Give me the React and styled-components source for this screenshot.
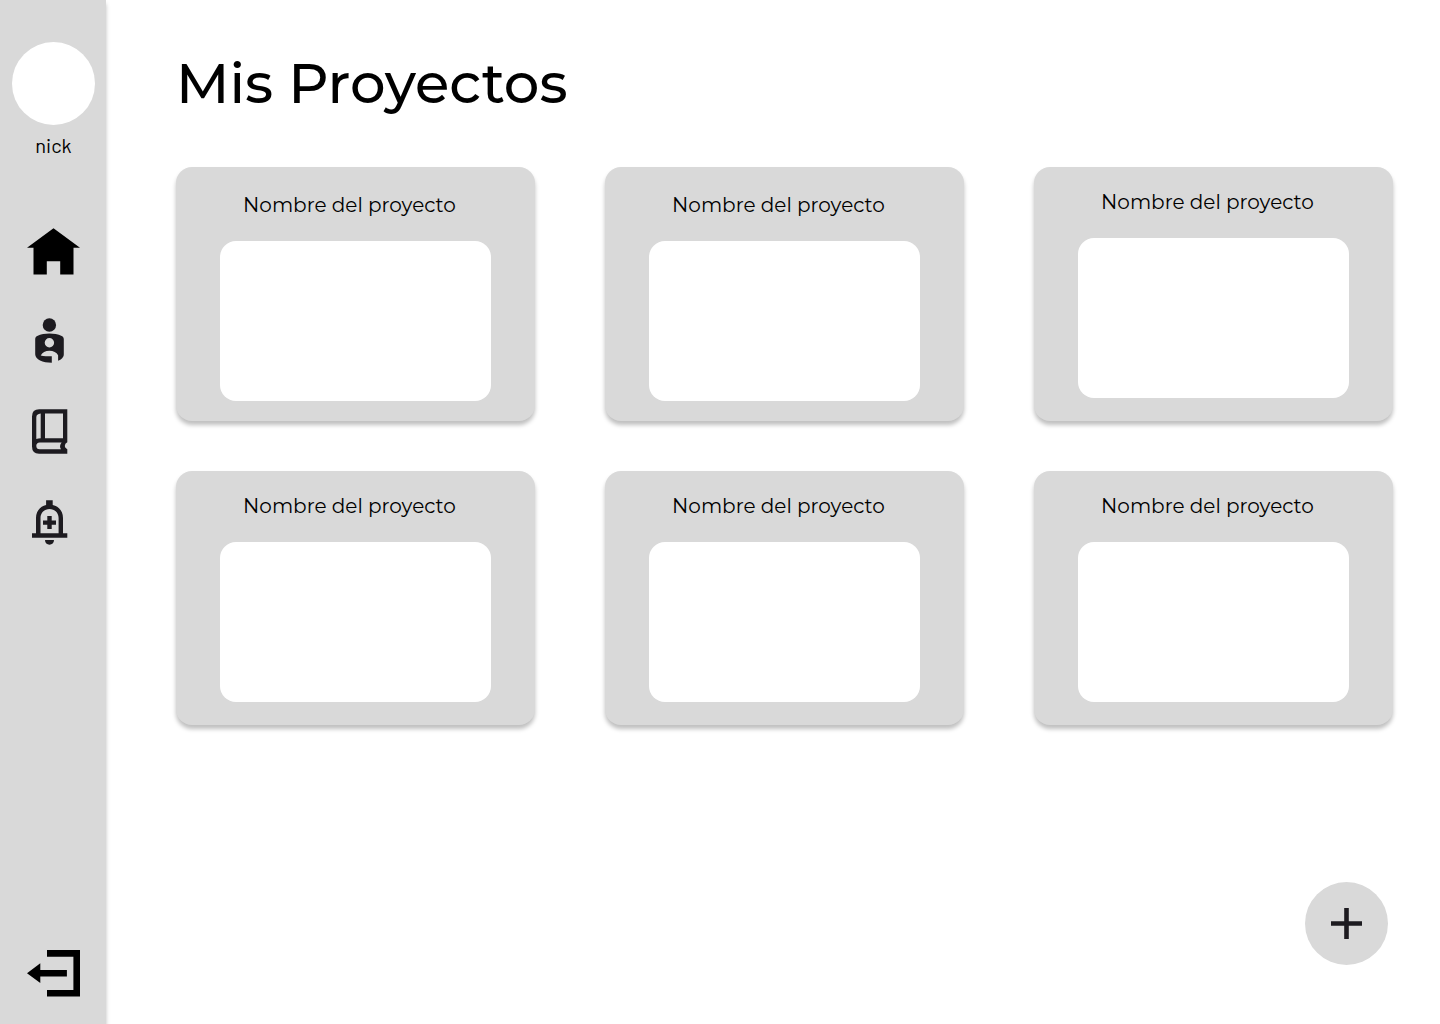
import React from "react";
import styled, { createGlobalStyle } from "styled-components";

const GlobalStyle = createGlobalStyle`
  *, *::before, *::after { box-sizing: border-box; }
  body { margin: 0; background: #fff; color: #000; font-family: Montserrat, Inter, sans-serif; }
`;

const Page = styled.div`
  display: flex;
  min-height: 100vh;
`;

const Sidebar = styled.aside`
  display: flex;
  flex-direction: column;
  align-items: center;
  flex: 0 0 106px;
  padding: 42px 0 27px;
  background: #d9d9d9;
  box-shadow: 0 4px 4px rgba(0, 0, 0, 0.25);
`;

const Profile = styled.div`
  display: flex;
  flex-direction: column;
  align-items: center;
  gap: 8px;
  padding-left: 1px;
`;

const Avatar = styled.div`
  width: 83px;
  height: 83px;
  border-radius: 50%;
  background: #fff;
`;

const Nick = styled.span`
  font: 400 20px/24px Barlow, Roboto, sans-serif;
`;

const Nav = styled.nav`
  display: flex;
  flex-direction: column;
  gap: 44px;
  margin-top: 70px;
`;

const IconLink = styled.a`
  display: block;
  height: 47px;
  color: ${({ $tone }) => $tone || "#1d1b20"};
`;

const IconButton = styled.button`
  display: block;
  height: 47px;
  margin-top: auto;
  padding: 0;
  border: 0;
  background: none;
  color: #000;
  cursor: pointer;
`;

const Glyph = styled.svg`
  display: block;
  overflow: visible;
  fill: currentColor;
`;

const Main = styled.main`
  flex: 1;
  min-width: 0;
  padding: 49px 47px 49px 70px;
`;

const Title = styled.h1`
  margin: 0 0 50px;
  font-size: 56px;
  line-height: 68px;
  font-weight: 500;
`;

const Grid = styled.div`
  display: grid;
  grid-template-columns: repeat(3, minmax(0, 1fr));
  gap: 50px 70px;
`;

const Card = styled.article`
  display: flex;
  flex-direction: column;
  gap: 24px;
  min-height: 254px;
  padding: ${({ $roomy }) => ($roomy ? "26px 44px 20px" : "23px 44px")};
  border-radius: 16px;
  background: #d9d9d9;
  box-shadow: 0 4px 4px rgba(0, 0, 0, 0.25);
`;

const CardTitle = styled.h2`
  margin: 0;
  padding-right: 12px;
  text-align: center;
  white-space: nowrap;
  font-size: 20px;
  line-height: 24px;
  font-weight: 400;
`;

const Preview = styled.div`
  height: 160px;
  border-radius: 16px;
  background: #fff;
`;

const AddButton = styled.button`
  position: fixed;
  right: 52px;
  bottom: 59px;
  display: grid;
  place-items: center;
  width: 83px;
  height: 83px;
  padding: 0;
  border: 0;
  border-radius: 50%;
  background: #d9d9d9;
  color: #1d1b20;
  cursor: pointer;
`;

const Icon = ({ children }) => (
  <Glyph width="53" height="47" viewBox="0 0 53 47" aria-hidden="true">{children}</Glyph>
);

const HomeIcon = () => (
  <Icon><path d="M26.5 1.2 53 20.8H46.5V47.5H33.2V34.2H19.8V47.5H6.5V20.8H0Z" /></Icon>
);

const PersonIcon = () => (
  <Icon>
    <circle cx="22.4" cy="7" r="6.7" />
    <path
      fillRule="evenodd"
      d="M8.2 21.2C8.2 19.8 8.9 18.7 10.2 18C17.5 14.8 27.4 14.8 34.7 18C36 18.7 36.8 19.8 36.8 21.2V36.2C36.8 39.4 34.4 41.4 31.1 42.7V37.3C29.6 34.3 26.4 32.7 22.4 32.7C18.4 32.7 15.2 34.3 13.7 37.4C16.6 38.3 20.7 38.3 24.8 38.3V44.7C15.7 44.7 8.2 41.2 8.2 36.2ZM22.4 20A4.7 4.7 0 1 0 22.4 29.4A4.7 4.7 0 1 0 22.4 20Z"
    />
  </Icon>
);

const BookIcon = () => (
  <Icon>
    <path
      fillRule="evenodd"
      d="M12.2 0.3H40.3V33.3L38.4 34.7Q37.3 36.8 38.4 38.8L40.3 40.3V44.7H12Q5 44.7 5 37.6V7.4Q5 0.3 12.2 0.3ZM18 4.5V29.3H36V4.5ZM13.7 4.6Q9.3 5 9.3 8.5V29.9Q11.3 29.3 13.7 29.3ZM12.7 33.4Q9.3 33.6 9.3 36.8Q9.3 40.3 12.7 40.3H34Q31.8 36.8 34.6 33.4Z"
    />
  </Icon>
);

const BellIcon = () => (
  <Icon>
    <path
      fillRule="evenodd"
      d="M19.1 0.3H25.7V5C32 6.4 36 11.5 36 18V33.3H40.3V37.7H5V33.3H9V18C9 11.5 13 6.4 19.1 5ZM13.5 33.3H31.6V18C31.6 12.8 27.7 9 22.5 9C17.4 9 13.5 12.8 13.5 18Z"
    />
    <path d="M20.3 16H24.7V20.4H29V24.7H24.7V29H20.3V24.7H16V20.4H20.3ZM18 40H27C27 42.8 25 44.7 22.5 44.7C20 44.7 18 42.8 18 40Z" />
  </Icon>
);

const ExitIcon = () => (
  <Icon><path d="M20 0H53V46.6H20V39.9H46.4V6.7H20ZM0 23.3 13.3 13.3V20H39.9V26.6H13.3V33Z" /></Icon>
);

const projects = [
  { id: 1, name: "Nombre del proyecto", roomy: true },
  { id: 2, name: "Nombre del proyecto", roomy: true },
  { id: 3, name: "Nombre del proyecto" },
  { id: 4, name: "Nombre del proyecto" },
  { id: 5, name: "Nombre del proyecto" },
  { id: 6, name: "Nombre del proyecto" },
];

export default function App() {
  return (
    <>
      <GlobalStyle />
      <Page>
        <Sidebar>
          <Profile>
            <Avatar />
            <Nick>nick</Nick>
          </Profile>
          <Nav>
            <IconLink href="#inicio" aria-label="Inicio" $tone="#000"><HomeIcon /></IconLink>
            <IconLink href="#perfil" aria-label="Perfil"><PersonIcon /></IconLink>
            <IconLink href="#biblioteca" aria-label="Biblioteca"><BookIcon /></IconLink>
            <IconLink href="#avisos" aria-label="Avisos"><BellIcon /></IconLink>
          </Nav>
          <IconButton type="button" aria-label="Salir"><ExitIcon /></IconButton>
        </Sidebar>
        <Main>
          <Title>Mis Proyectos</Title>
          <Grid>
            {projects.map(({ id, name, roomy }) => (
              <Card key={id} $roomy={roomy}>
                <CardTitle>{name}</CardTitle>
                <Preview />
              </Card>
            ))}
          </Grid>
        </Main>
        <AddButton type="button" aria-label="Nuevo proyecto">
          <Glyph width="31" height="31" viewBox="0 0 31 31" aria-hidden="true">
            <path d="M13.2 0H17.8V13.2H31V17.8H17.8V31H13.2V17.8H0V13.2H13.2Z" />
          </Glyph>
        </AddButton>
      </Page>
    </>
  );
}
